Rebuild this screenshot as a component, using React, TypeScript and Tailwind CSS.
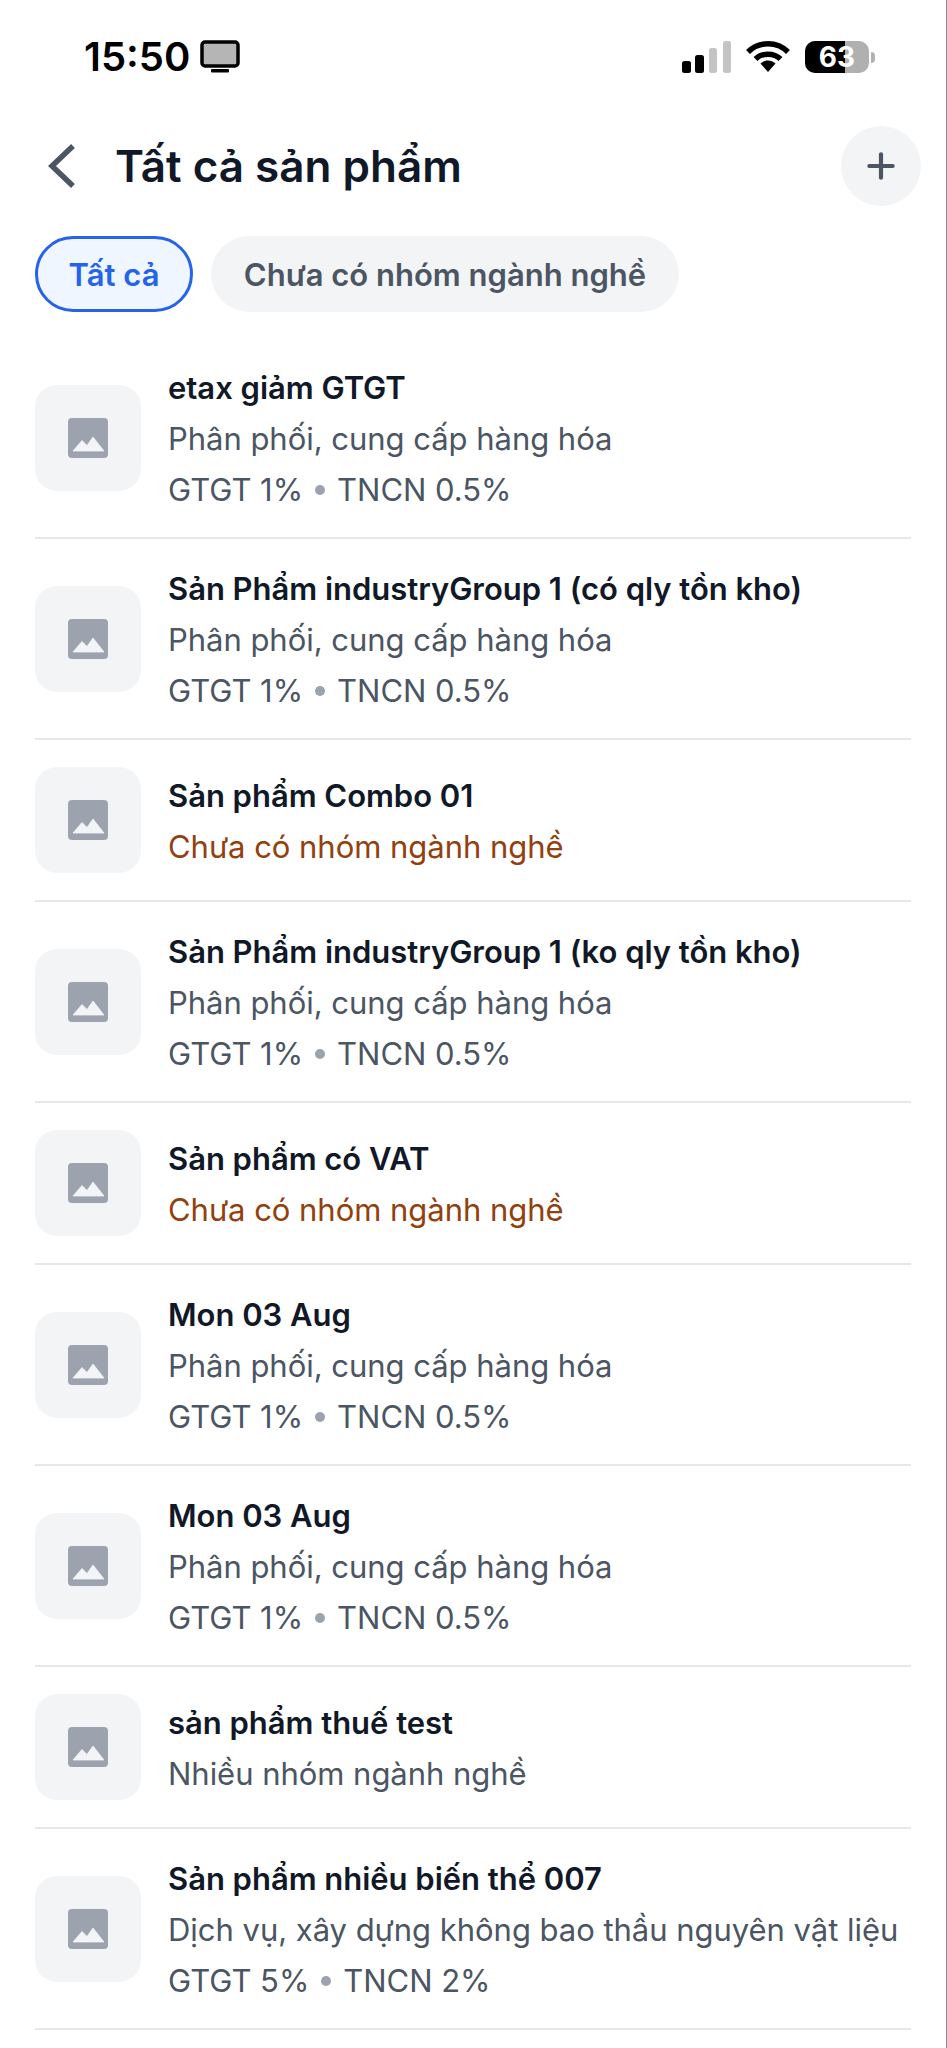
import { Plus } from 'lucide-react';

interface Product {
  name: string;
  group: string;
  tax?: string;
  missing?: boolean;
}

const products: Product[] = [
  { name: 'etax giảm GTGT', group: 'Phân phối, cung cấp hàng hóa', tax: 'GTGT 1%|TNCN 0.5%' },
  { name: 'Sản Phẩm industryGroup 1 (có qly tồn kho)', group: 'Phân phối, cung cấp hàng hóa', tax: 'GTGT 1%|TNCN 0.5%' },
  { name: 'Sản phẩm Combo 01', group: 'Chưa có nhóm ngành nghề', missing: true },
  { name: 'Sản Phẩm industryGroup 1 (ko qly tồn kho)', group: 'Phân phối, cung cấp hàng hóa', tax: 'GTGT 1%|TNCN 0.5%' },
  { name: 'Sản phẩm có VAT', group: 'Chưa có nhóm ngành nghề', missing: true },
  { name: 'Mon 03 Aug', group: 'Phân phối, cung cấp hàng hóa', tax: 'GTGT 1%|TNCN 0.5%' },
  { name: 'Mon 03 Aug', group: 'Phân phối, cung cấp hàng hóa', tax: 'GTGT 1%|TNCN 0.5%' },
  { name: 'sản phẩm thuế test', group: 'Nhiều nhóm ngành nghề' },
  { name: 'Sản phẩm nhiều biến thể 007', group: 'Dịch vụ, xây dựng không bao thầu nguyên vật liệu', tax: 'GTGT 5%|TNCN 2%' },
];

function StatusBar() {
  return (
    <div className="flex h-[112px] items-center justify-between pl-[84px] pr-[71px] pt-[2px]">
      <div className="flex items-center gap-[10px]">
        <span className="text-[40px] font-semibold leading-none text-black">15:50</span>
        <svg width="40" height="34" viewBox="0 0 40 34">
          <rect x="2" y="2" width="36" height="24" rx="3" fill="#b5b5b5" stroke="#000" strokeWidth="3.5" />
          <rect x="11" y="29" width="18" height="3.5" rx="1" fill="#000" />
        </svg>
      </div>
      <div className="flex items-center gap-[16px]">
        <svg width="49" height="32" viewBox="0 0 49 32" className="mr-[-1px]">
          <rect x="0" y="20" width="9" height="12" rx="2.5" fill="#000" />
          <rect x="13" y="14" width="9" height="18" rx="2.5" fill="#000" />
          <rect x="27" y="7" width="8" height="25" rx="2.5" fill="#c4c4c4" />
          <rect x="41" y="0" width="8" height="32" rx="2.5" fill="#c4c4c4" />
        </svg>
        <svg width="44" height="32" viewBox="0 0 44 32" className="mr-[-1px]">
          <path d="M2 11 C13 0 31 0 42 11" fill="none" stroke="#000" strokeWidth="5.5" />
          <path d="M9.5 18 C16 11.5 28 11.5 34.5 18" fill="none" stroke="#000" strokeWidth="5.5" />
          <path d="M14.5 22.5 C19 18.5 25 18.5 29.5 22.5 L22 31 Z" fill="#000" />
        </svg>
        <div className="flex items-center gap-[2px]">
          <div className="relative h-[32px] w-[64px] overflow-hidden rounded-[10px] bg-[#b0b0b0]">
            <div className="h-full w-[40px] bg-black" />
            <span className="absolute inset-0 flex items-center justify-center text-[28px] font-bold leading-none text-white">63</span>
          </div>
          <div className="h-[11px] w-[4px] rounded-r-full bg-[#b0b0b0]" />
        </div>
      </div>
    </div>
  );
}

function Thumb() {
  return (
    <div className="flex h-[106px] w-[106px] shrink-0 items-center justify-center rounded-[22px] bg-[#f3f4f6]">
      <svg width="40" height="40" viewBox="0 0 40 40">
        <rect width="40" height="40" rx="4" fill="#9ca3af" />
        <path d="M5 33 L14 22.5 L19 27.5 L25 19 L36 33 Z" fill="#f3f4f6" strokeLinejoin="round" stroke="#f3f4f6" strokeWidth="0.8" />
      </svg>
    </div>
  );
}

function ProductRow({ product }: { product: Product }) {
  const [vat, pit] = product.tax ? product.tax.split('|') : ['', ''];
  return (
    <div className="flex min-h-[162px] items-center gap-[27px] border-b-[2px] border-[#e5e7eb] py-[22px]">
      <Thumb />
      <div className="min-w-0 flex-1 pt-[2px] text-[31px] leading-[51px] tracking-[-0.03px]">
        <div className="font-semibold text-[#111827]">{product.name}</div>
        <div className={`whitespace-nowrap ${product.missing ? 'text-[#92400e]' : 'text-[#4b5563]'}`}>{product.group}</div>
        {product.tax && (
          <div className="flex items-center text-[#4b5563]">
            <span>{vat}</span>
            <span className="mx-[12px] h-[10px] w-[10px] rounded-full bg-[#9ca3af]" />
            <span>{pit}</span>
          </div>
        )}
      </div>
    </div>
  );
}

export default function App() {
  return (
    <div className="h-[2048px] overflow-hidden border-r border-[#8c8c8c] bg-white font-['Inter',sans-serif]">
      <StatusBar />
      {/* Header */}
      <div className="mt-[14px] flex items-center justify-between pl-[47px] pr-[25px]">
        <div className="flex items-center gap-[38px]">
          <svg width="30" height="46" viewBox="0 0 30 46">
            <path d="M26 3 L5 23 L26 43" fill="none" stroke="#4b5563" strokeWidth="5.5" />
          </svg>
          <h1 className="text-[44px] font-semibold leading-none text-[#111827]">Tất cả sản phẩm</h1>
        </div>
        <button className="flex h-[80px] w-[80px] items-center justify-center rounded-full bg-[#f3f4f6]">
          <Plus size={40} strokeWidth={2.5} className="text-[#4b5563]" />
        </button>
      </div>
      {/* Filters */}
      <div className="mt-[30px] flex gap-[18px] px-[35px]">
        <button className="flex h-[76px] w-[158px] items-center justify-center rounded-full border-[3px] border-[#2563eb] bg-[#eff6ff] pt-[2px] text-[31px] font-semibold text-[#2563eb]">
          Tất cả
        </button>
        <button className="flex h-[76px] w-[468px] items-center justify-center rounded-full bg-[#f3f4f6] pt-[2px] text-[31px] font-semibold text-[#4b5563]">
          Chưa có nhóm ngành nghề
        </button>
      </div>
      {/* Product list */}
      <div className="mt-[26px] ml-[35px] mr-[35px]">
        {products.map((product, i) => (
          <ProductRow key={i} product={product} />
        ))}
      </div>
    </div>
  );
}
